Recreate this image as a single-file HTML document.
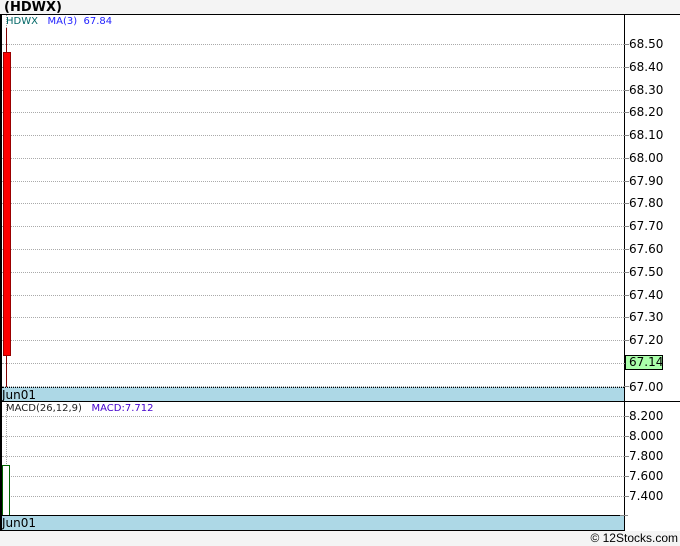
<!DOCTYPE html>
<html><head><style>
body{margin:0;width:680px;height:546px;background:#f4f4f4;position:relative;overflow:hidden;font-family:"DejaVu Sans","Liberation Sans",sans-serif;}
.a{position:absolute}
.g{position:absolute;left:2px;width:622px;height:0;border-top:1px dotted #aaa}
.l{position:absolute;left:629px;font-size:12px;color:#000;line-height:12px}
.t{position:absolute;left:624px;width:5px;height:1px;background:#888}
</style></head><body>
<div class="a" style="left:4px;top:0;font:bold 13px 'DejaVu Sans',sans-serif;color:#000">(HDWX)</div>
<div class="a" style="left:0;top:14px;width:680px;height:517px;background:#fff"></div>
<div class="a" style="left:0;top:14px;width:680px;height:1px;background:#000"></div>
<div class="a" style="left:0;top:14px;width:2px;height:517px;background:#000"></div>
<div class="a" style="left:624px;top:14px;width:1px;height:517px;background:#000"></div>
<div class="a" style="left:0;top:530px;width:625px;height:1px;background:#000"></div>
<div class="a" style="left:6px;top:15px;width:0;height:515px;border-left:1px dotted #aaa"></div>
<!-- main grid -->
<div class="g" style="top:44px"></div><div class="g" style="top:67px"></div><div class="g" style="top:90px"></div><div class="g" style="top:112px"></div><div class="g" style="top:135px"></div><div class="g" style="top:158px"></div><div class="g" style="top:181px"></div><div class="g" style="top:203px"></div><div class="g" style="top:226px"></div><div class="g" style="top:249px"></div><div class="g" style="top:272px"></div><div class="g" style="top:295px"></div><div class="g" style="top:317px"></div><div class="g" style="top:340px"></div><div class="g" style="top:363px"></div><div class="g" style="top:386px"></div>
<div class="l" style="top:38px">68.50</div><div class="l" style="top:61px">68.40</div><div class="l" style="top:84px">68.30</div><div class="l" style="top:106px">68.20</div><div class="l" style="top:129px">68.10</div><div class="l" style="top:152px">68.00</div><div class="l" style="top:175px">67.90</div><div class="l" style="top:197px">67.80</div><div class="l" style="top:220px">67.70</div><div class="l" style="top:243px">67.60</div><div class="l" style="top:266px">67.50</div><div class="l" style="top:289px">67.40</div><div class="l" style="top:311px">67.30</div><div class="l" style="top:334px">67.20</div><div class="l" style="top:381px">67.00</div>
<div class="t" style="top:44px"></div><div class="t" style="top:67px"></div><div class="t" style="top:90px"></div><div class="t" style="top:112px"></div><div class="t" style="top:135px"></div><div class="t" style="top:158px"></div><div class="t" style="top:181px"></div><div class="t" style="top:203px"></div><div class="t" style="top:226px"></div><div class="t" style="top:249px"></div><div class="t" style="top:272px"></div><div class="t" style="top:295px"></div><div class="t" style="top:317px"></div><div class="t" style="top:340px"></div><div class="t" style="top:363px"></div><div class="t" style="top:386px"></div>
<div class="a" style="left:625px;top:355px;width:38px;height:15px;background:#aaffaa;border:1px solid #000;box-sizing:border-box;font-size:12px;line-height:13px;padding-left:3px">67.14</div>
<div class="a" style="left:6px;top:28px;width:1px;height:359px;background:#800000"></div>
<div class="a" style="left:3px;top:52px;width:8px;height:304px;background:#f00;border:1px solid #900;box-sizing:border-box"></div>
<div class="a" style="left:6px;top:16px;font-size:10px;line-height:12px;color:#080"><span style="color:#066">HDWX</span>&nbsp;&nbsp;&nbsp;<span style="color:#22f">MA(3)</span>&nbsp;&nbsp;<span style="color:#22f">67.84</span></div>
<div class="a" style="left:2px;top:387px;width:622px;height:14px;background:#add8e6;font-size:12px;line-height:14px;border-top:1px dotted #000;box-sizing:border-box">Jun01</div>
<div class="a" style="left:0;top:401px;width:680px;height:1px;background:#000"></div>
<!-- macd -->
<div class="g" style="top:416px"></div><div class="g" style="top:436px"></div><div class="g" style="top:456px"></div><div class="g" style="top:476px"></div><div class="g" style="top:496px"></div>
<div class="t" style="top:416px"></div><div class="t" style="top:436px"></div><div class="t" style="top:456px"></div><div class="t" style="top:476px"></div><div class="t" style="top:496px"></div>
<div class="l" style="top:410px">8.200</div><div class="l" style="top:430px">8.000</div><div class="l" style="top:450px">7.800</div><div class="l" style="top:470px">7.600</div><div class="l" style="top:490px">7.400</div>
<div class="a" style="left:6px;top:403px;font-size:10px;line-height:12px;color:#222">MACD(26,12,9)&nbsp;&nbsp;&nbsp;<span style="color:#40c">MACD:7.712</span></div>
<div class="a" style="left:2px;top:465px;width:8px;height:51px;background:#fff;border:1px solid #060;box-sizing:border-box"></div>
<div class="a" style="left:2px;top:515px;width:622px;height:15px;background:#add8e6;font-size:12px;line-height:15px;border-top:1px solid #000;box-sizing:border-box">Jun01</div>
<div class="a" style="left:620px;top:515px;width:8px;height:1px;background:#888"></div>
<div class="a" style="right:2px;top:531px;font-size:12px;line-height:14px;font-family:'Liberation Sans',sans-serif">© 12Stocks.com</div>
</body></html>
